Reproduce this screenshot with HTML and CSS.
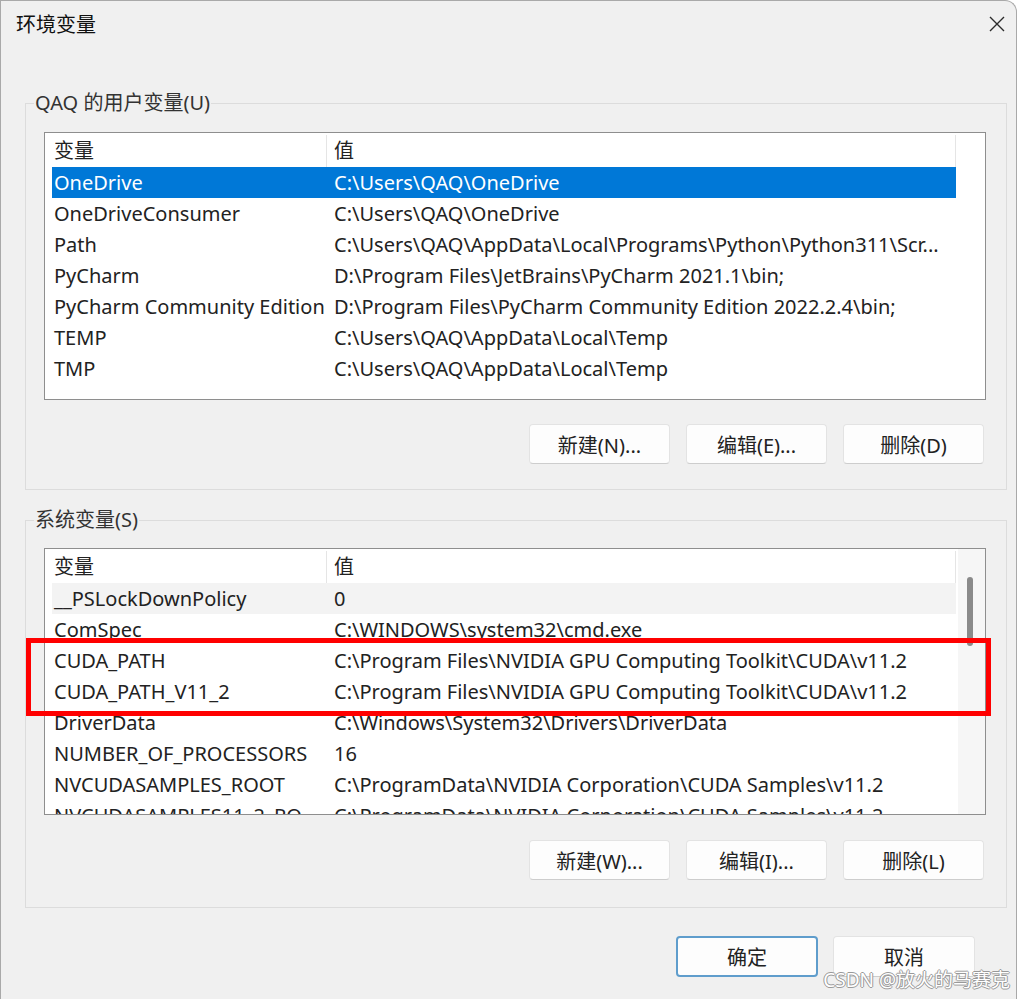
FILE: index.html
```html
<!DOCTYPE html>
<html lang="zh-CN">
<head>
    <meta charset="UTF-8">
    <title>环境变量</title>
    <link rel="stylesheet" href="styles.css">
</head>
<body>
    <div class="window">
        <div class="titlebar">
            <span class="title">环境变量</span>
            <span class="close">
                <svg width="16" height="16" viewBox="0 0 16 16"><path d="M1 1 L15 15 M15 1 L1 15" stroke="#2b2b2b" stroke-width="1.4" fill="none"/></svg>
            </span>
        </div>

        <!-- user variables -->
        <fieldset class="group user">
            <legend>QAQ 的用户变量(U)</legend>
            <div class="list user-list">
                <div class="list-main">
                    <div class="list-head">
                        <div class="head-name">变量</div>
                        <div class="head-value">值</div>
                    </div>
                    <div class="row selected"><div class="cell-name">OneDrive</div><div class="cell-value">C:\Users\QAQ\OneDrive</div></div>
                    <div class="row"><div class="cell-name">OneDriveConsumer</div><div class="cell-value">C:\Users\QAQ\OneDrive</div></div>
                    <div class="row"><div class="cell-name">Path</div><div class="cell-value">C:\Users\QAQ\AppData\Local\Programs\Python\Python311\Scr...</div></div>
                    <div class="row"><div class="cell-name">PyCharm</div><div class="cell-value">D:\Program Files\JetBrains\PyCharm 2021.1\bin;</div></div>
                    <div class="row"><div class="cell-name">PyCharm Community Edition</div><div class="cell-value">D:\Program Files\PyCharm Community Edition 2022.2.4\bin;</div></div>
                    <div class="row"><div class="cell-name">TEMP</div><div class="cell-value">C:\Users\QAQ\AppData\Local\Temp</div></div>
                    <div class="row"><div class="cell-name">TMP</div><div class="cell-value">C:\Users\QAQ\AppData\Local\Temp</div></div>
                </div>
            </div>
            <div class="btn-row">
                <div class="btn">新建(N)...</div>
                <div class="btn">编辑(E)...</div>
                <div class="btn">删除(D)</div>
            </div>
        </fieldset>

        <!-- system variables -->
        <fieldset class="group system">
            <legend>系统变量(S)</legend>
            <div class="list system-list">
                <div class="list-main">
                    <div class="list-head">
                        <div class="head-name">变量</div>
                        <div class="head-value">值</div>
                    </div>
                    <div class="row focus"><div class="cell-name">__PSLockDownPolicy</div><div class="cell-value">0</div></div>
                    <div class="row"><div class="cell-name">ComSpec</div><div class="cell-value">C:\WINDOWS\system32\cmd.exe</div></div>
                    <div class="row"><div class="cell-name">CUDA_PATH</div><div class="cell-value">C:\Program Files\NVIDIA GPU Computing Toolkit\CUDA\v11.2</div></div>
                    <div class="row"><div class="cell-name">CUDA_PATH_V11_2</div><div class="cell-value">C:\Program Files\NVIDIA GPU Computing Toolkit\CUDA\v11.2</div></div>
                    <div class="row"><div class="cell-name">DriverData</div><div class="cell-value">C:\Windows\System32\Drivers\DriverData</div></div>
                    <div class="row"><div class="cell-name">NUMBER_OF_PROCESSORS</div><div class="cell-value">16</div></div>
                    <div class="row"><div class="cell-name">NVCUDASAMPLES_ROOT</div><div class="cell-value">C:\ProgramData\NVIDIA Corporation\CUDA Samples\v11.2</div></div>
                    <div class="row"><div class="cell-name">NVCUDASAMPLES11_2_RO...</div><div class="cell-value">C:\ProgramData\NVIDIA Corporation\CUDA Samples\v11.2</div></div>
                </div>
                <div class="scrollbar"><div class="thumb"></div></div>
            </div>
            <div class="btn-row">
                <div class="btn">新建(W)...</div>
                <div class="btn">编辑(I)...</div>
                <div class="btn">删除(L)</div>
            </div>
        </fieldset>

        <div class="footer">
            <div class="btn wide default">确定</div>
            <div class="btn wide">取消</div>
        </div>

        <!-- annotation + watermark -->
        <div class="mark"></div>
        <div class="watermark">CSDN @放火的马赛克</div>
    </div>
</body>
</html>
```

FILE: styles.css
```css
body {
    margin: 0;
    background: #fff;
    font-family: "Noto Sans", "Noto Sans CJK SC", sans-serif;
    font-size: 20px;
    color: #222;
}
.window {
    position: relative;
    width: 1017px;
    height: 999px;
    box-sizing: border-box;
    background: #f0f0f0;
    border: 1px solid #a9a9a9;
    border-bottom: none;
    border-radius: 0 12px 0 0;
    overflow: hidden;
}
.titlebar {
    display: flex;
    align-items: center;
    justify-content: space-between;
    height: 45px;
    padding: 0 11px 0 15px;
}
.title {
    color: #111;
}
.close {
    display: flex;
}
.group {
    margin: 44px 0 0 24px;
    width: 982px;
    box-sizing: border-box;
    border: 1px solid #dcdcdc;
    padding: 16px 20px 25px 18px;
    min-width: 0;
}
.group legend {
    padding: 0 1px;
    margin-left: -10px;
    line-height: 26px;
    color: #333;
}
.group.system {
    margin-top: 17px;
    padding-top: 15px;
    padding-bottom: 27px;
}
.list {
    display: flex;
    height: 268px;
    box-sizing: border-box;
    background: #fff;
    border: 1px solid #8e8e8e;
    overflow: hidden;
}
.system-list {
    height: 267px;
}
.list-main {
    width: 904px;
    margin-left: 7px;
    padding-top: 2px;
}
.list-head {
    display: flex;
    height: 32px;
    line-height: 31px;
}
.head-name {
    width: 275px;
    box-sizing: border-box;
    padding-left: 2px;
    border-right: 1px solid #e5e5e5;
}
.head-value {
    flex: 1;
    padding-left: 7px;
    border-right: 1px solid #e5e5e5;
}
.row {
    display: flex;
    height: 31px;
    line-height: 31px;
    white-space: nowrap;
}
.row.selected {
    background: #0078d7;
    color: #fff;
}
.row.focus {
    background: #f3f3f3;
}
.cell-name {
    width: 280px;
    box-sizing: border-box;
    padding-left: 2px;
    overflow: hidden;
}
.cell-value {
    flex: 1;
    padding-left: 2px;
    overflow: hidden;
}
.scrollbar {
    flex: 1;
    margin-left: 2px;
    background: #f6f6f6;
}
.thumb {
    width: 6px;
    height: 69px;
    margin: 28px 0 0 9px;
    border-radius: 3px;
    background: #8a8a8a;
}
.btn-row {
    display: flex;
    justify-content: flex-end;
    gap: 16px;
    margin-top: 24px;
    padding-right: 2px;
}
.group.system .btn-row {
    margin-top: 25px;
}
.btn {
    width: 141px;
    height: 40px;
    box-sizing: border-box;
    display: flex;
    align-items: center;
    justify-content: center;
    background: #fdfdfd;
    border: 1px solid #e3e3e3;
    border-bottom-color: #cdcdcd;
    border-radius: 4px;
    color: #222;
}
.footer {
    display: flex;
    justify-content: flex-end;
    gap: 15px;
    margin-top: 28px;
    padding-right: 41px;
}
.btn.wide {
    width: 142px;
    height: 41px;
}
.btn.default {
    border: 2px solid #5f9dcc;
}
.mark {
    position: absolute;
    left: 25px;
    top: 637px;
    width: 965px;
    height: 78px;
    box-sizing: border-box;
    border: 5px solid #f00;
}
.watermark {
    position: absolute;
    right: 6px;
    top: 966px;
    line-height: 26px;
    font-size: 19px;
    color: #fff;
    text-shadow: -1px 0 #999, 1px 0 #999, 0 -1px #999, 0 1px #999;
}
```
